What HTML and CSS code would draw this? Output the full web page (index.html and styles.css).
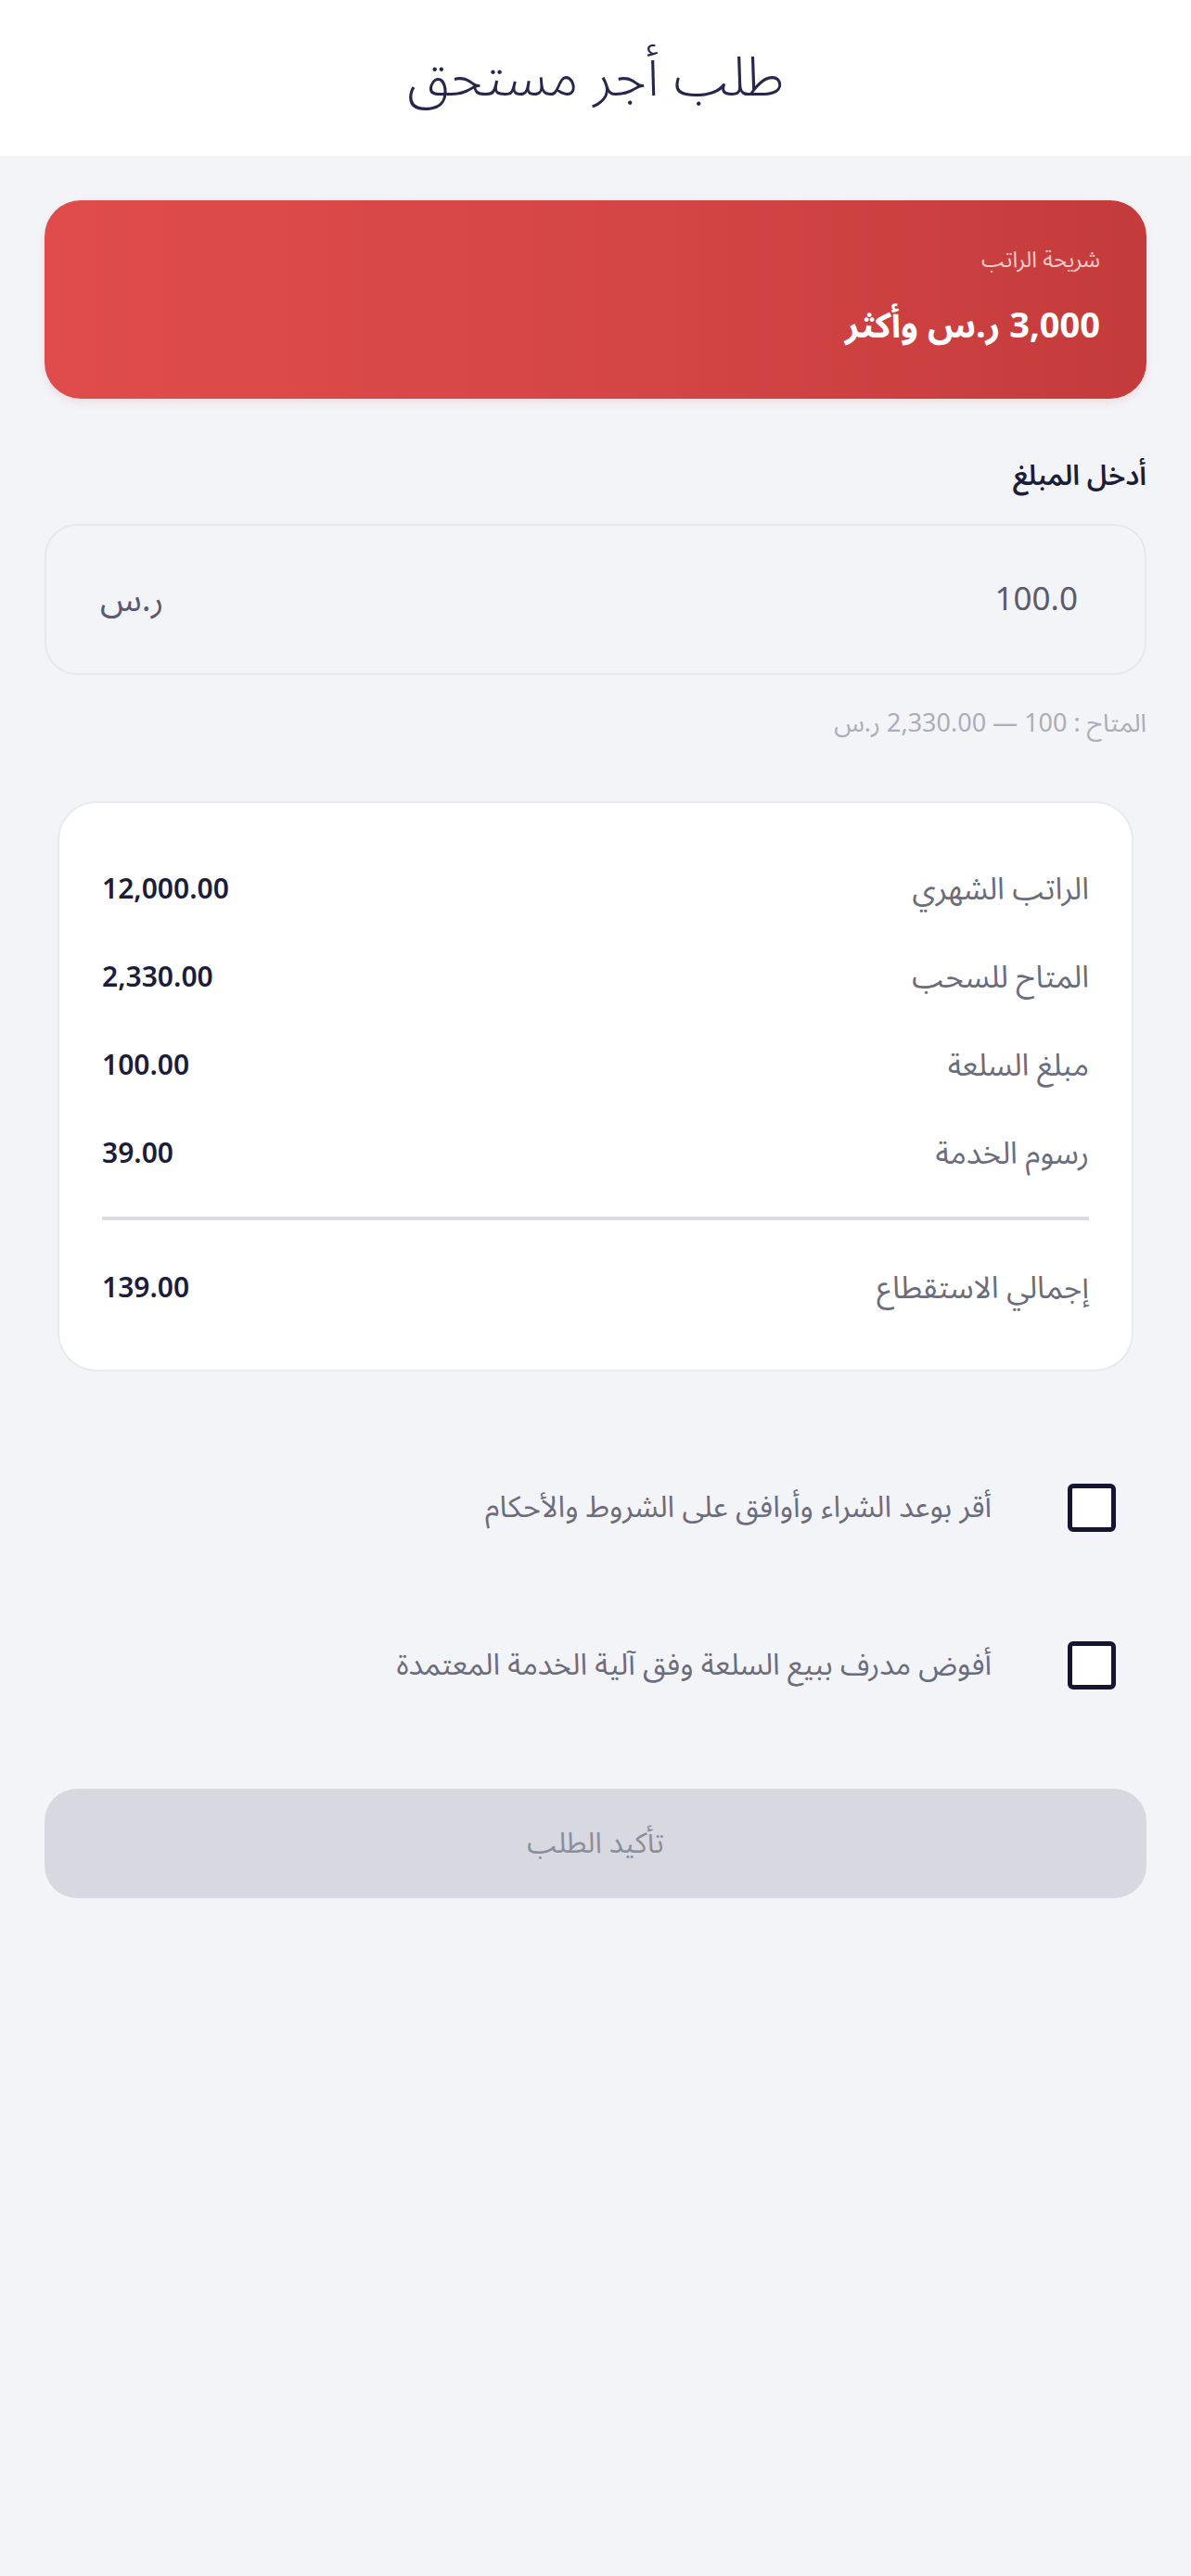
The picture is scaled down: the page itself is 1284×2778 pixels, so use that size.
FILE: index.html
```html
<!DOCTYPE html>
<html lang="ar" dir="rtl">
<head>
  <meta charset="UTF-8">
  <meta name="viewport" content="width=device-width, initial-scale=1.0">
  <title>طلب أجر مستحق</title>
  <link rel="stylesheet" href="styles.css">
</head>
<body>
  <!-- Top bar -->
  <header class="top-bar">
    <h1>طلب أجر مستحق</h1>
  </header>

  <main class="content">
    <!-- Salary tier -->
    <section class="tier-card">
      <p class="tier-label">شريحة الراتب</p>
      <p class="tier-value">3,000 ر.س وأكثر</p>
    </section>

    <!-- Amount input -->
    <section class="amount">
      <label class="amount-label" for="amount">أدخل المبلغ</label>
      <div class="amount-field">
        <input id="amount" type="text" value="100.0" dir="ltr">
        <span class="currency">ر.س</span>
      </div>
      <p class="amount-hint">المتاح : 100 — 2,330.00 ر.س</p>
    </section>

    <!-- Summary -->
    <section class="summary">
      <div class="summary-row">
        <span class="summary-label">الراتب الشهري</span>
        <span class="summary-value">12,000.00</span>
      </div>
      <div class="summary-row">
        <span class="summary-label">المتاح للسحب</span>
        <span class="summary-value">2,330.00</span>
      </div>
      <div class="summary-row">
        <span class="summary-label">مبلغ السلعة</span>
        <span class="summary-value">100.00</span>
      </div>
      <div class="summary-row">
        <span class="summary-label">رسوم الخدمة</span>
        <span class="summary-value">39.00</span>
      </div>
      <hr class="summary-divider">
      <div class="summary-row">
        <span class="summary-label">إجمالي الاستقطاع</span>
        <span class="summary-value">139.00</span>
      </div>
    </section>

    <!-- Agreements -->
    <section class="agreements">
      <label class="agree-row">
        <input type="checkbox" class="agree-box">
        <span>أقر بوعد الشراء وأوافق على الشروط والأحكام</span>
      </label>
      <label class="agree-row">
        <input type="checkbox" class="agree-box">
        <span>أفوض مدرف ببيع السلعة وفق آلية الخدمة المعتمدة</span>
      </label>
    </section>

    <button class="confirm-btn" disabled>تأكيد الطلب</button>
  </main>
</body>
</html>
```

FILE: styles.css
```css
/* Base */
html {
  background-color: #f3f4f8;
}

body {
  margin: 0;
  min-height: 2778px;
  font-family: "Noto Sans Arabic", "DejaVu Sans", sans-serif;
  background-color: #f3f4f8;
  color: #1c1d3a;
}

p {
  margin: 0;
}

/* Header */
.top-bar {
  height: 168px;
  background-color: #fff;
  display: flex;
  align-items: center;
  justify-content: center;
}

.top-bar h1 {
  margin: 0;
  font-size: 59px;
  font-weight: 300;
  color: #26274c;
}

.content {
  padding: 48px 48px 0;
}

/* Salary tier card */
.tier-card {
  height: 214px;
  box-sizing: border-box;
  border-radius: 39px;
  background: linear-gradient(90deg, #e04c4c 0%, #d44545 55%, #c43b3c 100%);
  padding: 0 50px;
  display: flex;
  flex-direction: column;
  justify-content: center;
  gap: 6px;
  box-shadow: 0 4px 10px rgba(200, 60, 60, 0.12);
}

.tier-label {
  font-size: 24px;
  color: #f6c9c9;
}

.tier-value {
  font-size: 38px;
  font-weight: 700;
  color: #fff;
}

/* Amount input */
.amount {
  margin-top: 52px;
}

.amount-label {
  display: block;
  font-size: 30px;
  font-weight: 600;
  color: #1c1d3a;
  margin-bottom: 20px;
}

.amount-field {
  height: 163px;
  box-sizing: border-box;
  border: 2px solid #e6e8ee;
  border-radius: 35px;
  padding: 0 70px 0 58px;
  display: flex;
  align-items: center;
}

.amount-field input {
  flex: 1;
  border: none;
  background: transparent;
  font-family: inherit;
  font-size: 35px;
  color: #5a5b6e;
  text-align: right;
  outline: none;
}

.currency {
  font-size: 37px;
  color: #5a5b6e;
  margin-right: 20px;
}

.amount-hint {
  margin-top: 24px;
  font-size: 27px;
  color: #acadb8;
}

/* Summary card */
.summary {
  margin: 55px 14px 0;
  background-color: #fff;
  border: 2px solid #e8eaef;
  border-radius: 42px;
  padding: 46px 46px 40px;
}

.summary-row {
  height: 95px;
  display: flex;
  align-items: center;
  justify-content: space-between;
}

.summary-label {
  font-size: 33px;
  color: #6b6c7c;
}

.summary-value {
  font-size: 30px;
  font-weight: 600;
  color: #1c1d3a;
  direction: ltr;
}

.summary-divider {
  border: none;
  height: 4px;
  background-color: #dcdde3;
  margin: 20px 0 26px;
}

/* Agreements */
.agreements {
  margin-top: 113px;
  padding: 0 33px;
  display: flex;
  flex-direction: column;
  gap: 102px;
}

.agree-row {
  display: flex;
  align-items: center;
  gap: 82px;
  font-size: 32px;
  color: #6b6c7c;
}

.agree-box {
  appearance: none;
  -webkit-appearance: none;
  margin: 0;
  width: 52px;
  height: 52px;
  box-sizing: border-box;
  border: 5px solid #141530;
  border-radius: 6px;
  background-color: #fff;
  flex-shrink: 0;
}

/* Confirm button */
.confirm-btn {
  margin-top: 99px;
  width: 100%;
  height: 118px;
  border: none;
  border-radius: 35px;
  background-color: #d8d9e0;
  font-family: inherit;
  font-size: 31px;
  color: #8c8d9c;
}
```
